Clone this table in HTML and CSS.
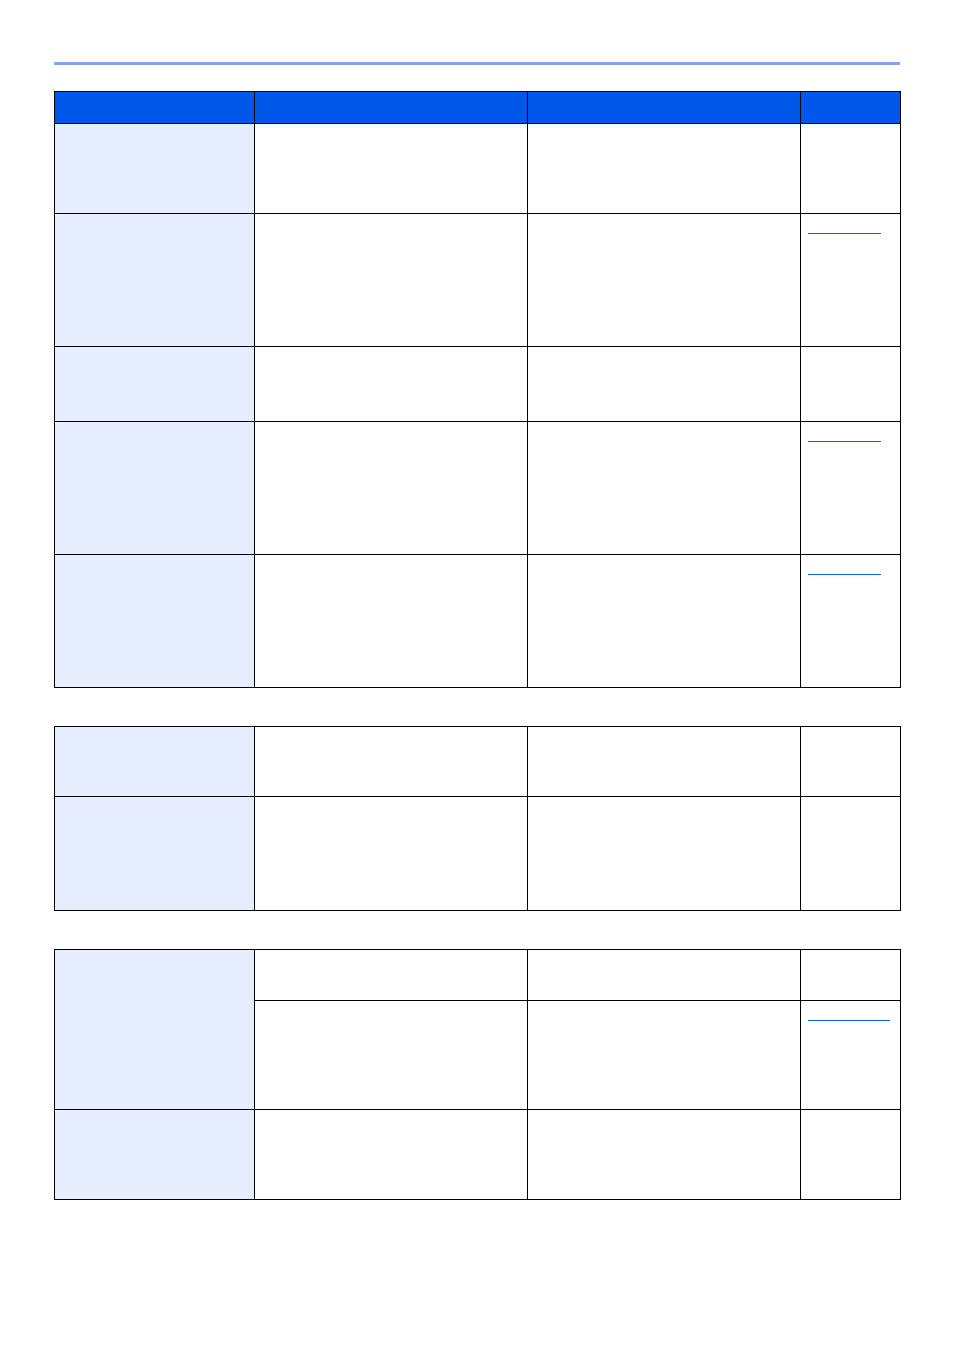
FILE: index.html
```html
<!DOCTYPE html>
<html>
<head>
<meta charset="utf-8">
<link rel="stylesheet" href="styles.css">
</head>
<body>
<div class="page">
  <div class="rule"></div>

  <table class="grid t1">
    <colgroup><col class="c1"><col class="c2"><col class="c3"><col class="c4"></colgroup>
    <thead>
      <tr class="h32"><th></th><th></th><th></th><th></th></tr>
    </thead>
    <tbody>
      <tr class="h90"><td class="key"></td><td></td><td></td><td></td></tr>
      <tr class="h133"><td class="key"></td><td></td><td></td><td class="ref"><span class="link"></span></td></tr>
      <tr class="h75"><td class="key"></td><td></td><td></td><td></td></tr>
      <tr class="h133"><td class="key"></td><td></td><td></td><td class="ref"><span class="link"></span></td></tr>
      <tr class="h133"><td class="key"></td><td></td><td></td><td class="ref"><span class="link"></span></td></tr>
    </tbody>
  </table>

  <table class="grid t2">
    <colgroup><col class="c1"><col class="c2"><col class="c3"><col class="c4"></colgroup>
    <tbody>
      <tr class="h70"><td class="key"></td><td></td><td></td><td></td></tr>
      <tr class="h114"><td class="key"></td><td></td><td></td><td></td></tr>
    </tbody>
  </table>

  <table class="grid t3">
    <colgroup><col class="c1"><col class="c2"><col class="c3"><col class="c4"></colgroup>
    <tbody>
      <tr class="h51"><td class="key" rowspan="2"></td><td></td><td></td><td></td></tr>
      <tr class="h109"><td></td><td></td><td class="ref"><span class="link wide"></span></td></tr>
      <tr class="h90"><td class="key"></td><td></td><td></td><td></td></tr>
    </tbody>
  </table>
</div>
</body>
</html>
```

FILE: styles.css
```css
html, body {
  margin: 0;
  padding: 0;
  background: #ffffff;
  font-family: "Liberation Sans", Arial, sans-serif;
}

.page {
  padding: 62px 0 0 54px;
  width: 847px;
}

.rule {
  height: 3px;
  background: #7aaaf5;
  width: 846px;
}

.grid {
  border-collapse: collapse;
  table-layout: fixed;
  width: 847px;
}

.grid th,
.grid td {
  border: 1px solid #000000;
  padding: 0;
  vertical-align: top;
}

.grid th {
  background: #0058eb;
}

.t1 { margin-top: 26px; }
.t2 { margin-top: 38px; }
.t3 { margin-top: 38px; }

.c1 { width: 200px; }
.c2 { width: 273px; }
.c3 { width: 273px; }
.c4 { width: 100px; }

.key { background: #e6edfc; }

.h32 { height: 32px; }
.h51 { height: 51px; }
.h70 { height: 70px; }
.h75 { height: 75px; }
.h90 { height: 90px; }
.h109 { height: 109px; }
.h114 { height: 114px; }
.h133 { height: 133px; }

.ref {
  padding: 19px 0 0 7px !important;
}

.link {
  display: block;
  width: 73px;
  height: 0;
  border-bottom: 1px solid #1f5fd0;
}

.link.wide {
  width: 82px;
  border-bottom-color: #0060ff;
}
```
